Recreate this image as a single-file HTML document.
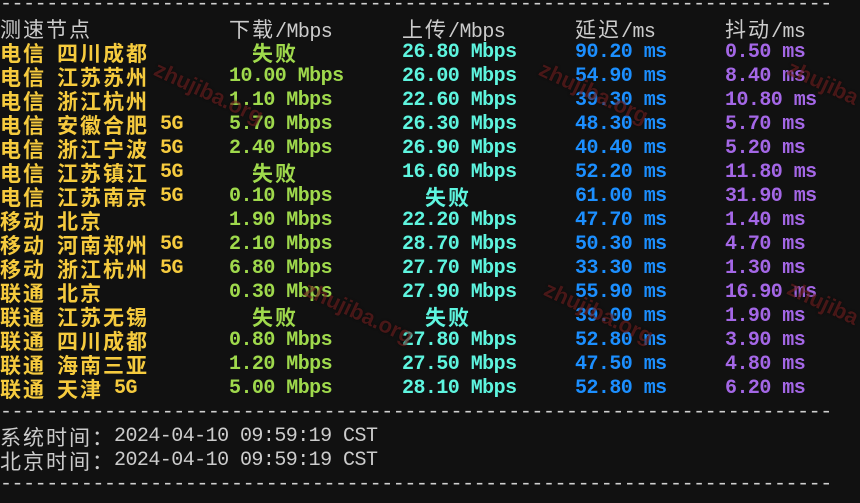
<!DOCTYPE html>
<html><head><meta charset="utf-8"><style>
body{margin:0;width:860px;height:503px;background:#111111;overflow:hidden;position:relative;font-family:"Liberation Mono","Noto Sans CJK SC",monospace;font-size:20px;letter-spacing:-0.55px}
.r{position:absolute;left:0;height:24px;line-height:24px;width:860px;white-space:pre}
.r span{position:absolute;top:0}
.c{font-family:"Noto Sans CJK SC",sans-serif;font-size:21px;letter-spacing:2px}
.b{font-weight:bold}
.y{color:#f6cb3e}.g{color:#9fd94c}.t{color:#5ef5df}.bl{color:#1c8fff}.p{color:#a467e6}.w{color:#cccccc}
.d{position:absolute;left:0;color:#d0d0d0;white-space:pre;line-height:24px;letter-spacing:-0.45px}
.wm{position:absolute;color:rgba(150,40,40,0.45);font-family:"Liberation Sans",sans-serif;font-weight:bold;font-size:22px;letter-spacing:0;transform:rotate(25deg);text-shadow:0 0 2px rgba(0,0,0,.5)}
</style></head><body>
<div class="d" style="top:-7px">------------------------------------------------------------------------</div>
<div class="d" style="top:401px">------------------------------------------------------------------------</div>
<div class="d" style="top:473px">------------------------------------------------------------------------</div>

<div class="r w" style="top:17px"><span class="c" style="left:0">测速节点</span><span style="left:229px"><span class="c" style="position:static">下载</span>/Mbps</span><span style="left:402px"><span class="c" style="position:static">上传</span>/Mbps</span><span style="left:575px"><span class="c" style="position:static">延迟</span>/ms</span><span style="left:725px"><span class="c" style="position:static">抖动</span>/ms</span></div>

<div id="rows"></div>
<div class="wm" style="left:150px;top:80px">zhujiba.org</div>
<div class="wm" style="left:535px;top:80px">zhujiba.org</div>
<div class="wm" style="left:785px;top:70px">zhujiba</div>
<div class="wm" style="left:300px;top:300px">zhujiba.org</div>
<div class="wm" style="left:540px;top:300px">zhujiba.org</div>
<div class="wm" style="left:785px;top:290px">zhujiba</div>

<div class="r w" style="top:425px"><span class="c" style="left:0">系统时间：</span><span style="left:114px">2024-04-10 09:59:19 CST</span></div>
<div class="r w" style="top:449px"><span class="c" style="left:0">北京时间：</span><span style="left:114px">2024-04-10 09:59:19 CST</span></div>

<script>
var data=[
["电信","四川成都","","F","26.80","90.20","0.50"],
["电信","江苏苏州","","10.00","26.00","54.90","8.40"],
["电信","浙江杭州","","1.10","22.60","39.30","10.80"],
["电信","安徽合肥","5G","5.70","26.30","48.30","5.70"],
["电信","浙江宁波","5G","2.40","26.90","40.40","5.20"],
["电信","江苏镇江","5G","F","16.60","52.20","11.80"],
["电信","江苏南京","5G","0.10","F","61.00","31.90"],
["移动","北京","","1.90","22.20","47.70","1.40"],
["移动","河南郑州","5G","2.10","28.70","50.30","4.70"],
["移动","浙江杭州","5G","6.80","27.70","33.30","1.30"],
["联通","北京","","0.30","27.90","55.90","16.90"],
["联通","江苏无锡","","F","F","39.00","1.90"],
["联通","四川成都","","0.80","27.80","52.80","3.90"],
["联通","海南三亚","","1.20","27.50","47.50","4.80"],
["联通","天津","5G","5.00","28.10","52.80","6.20"]];
var h="";
data.forEach(function(d,i){
var top=41+i*24;
var nameW=d[1].length*23;
h+='<div class="r b" style="top:'+top+'px">';
h+='<span class="c y" style="left:0">'+d[0]+'</span>';
h+='<span class="c y" style="left:57px">'+d[1]+'</span>';
if(d[2])h+='<span class="y" style="left:'+(57+nameW+11)+'px">5G</span>';
h+=d[3]=="F"?'<span class="c g" style="left:252px">失败</span>':'<span class="g" style="left:229px">'+d[3]+' Mbps</span>';
h+=d[4]=="F"?'<span class="c t" style="left:425px">失败</span>':'<span class="t" style="left:402px">'+d[4]+' Mbps</span>';
h+='<span class="bl" style="left:575px">'+d[5]+' ms</span>';
h+='<span class="p" style="left:725px">'+d[6]+' ms</span></div>';
});
document.getElementById("rows").innerHTML=h;
</script>
</body></html>
